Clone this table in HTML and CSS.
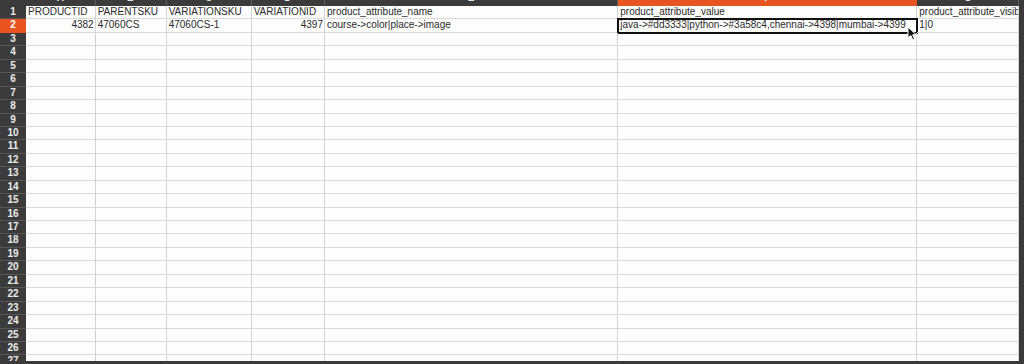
FILE: index.html
```html
<!DOCTYPE html>
<html>
<head>
<meta charset="utf-8">
<title>Sheet</title>
<link rel="stylesheet" href="styles.css">
</head>
<body>
<div class="frame">
  <div class="sheet">
    <div class="ch corner"></div>
    <div class="ch"><span>A</span></div>
    <div class="ch"><span>B</span></div>
    <div class="ch"><span>C</span></div>
    <div class="ch"><span>D</span></div>
    <div class="ch"><span>E</span></div>
    <div class="ch sel"><span>F</span></div>
    <div class="ch"><span>G</span></div>

    <div class="rh">1</div>
    <div class="c">PRODUCTID</div>
    <div class="c">PARENTSKU</div>
    <div class="c">VARIATIONSKU</div>
    <div class="c">VARIATIONID</div>
    <div class="c">product_attribute_name</div>
    <div class="c">product_attribute_value</div>
    <div class="c">product_attribute_visibility</div>

    <div class="rh sel">2</div>
    <div class="c num">4382</div>
    <div class="c">47060CS</div>
    <div class="c">47060CS-1</div>
    <div class="c num">4397</div>
    <div class="c">course-&gt;color|place-&gt;image</div>
    <div class="c active">java-&gt;#dd3333|python-&gt;#3a58c4,chennai-&gt;4398|mumbai-&gt;4399</div>
    <div class="c">1|0</div>

    <div class="rh">3</div><div class="c"></div><div class="c"></div><div class="c"></div><div class="c"></div><div class="c"></div><div class="c"></div><div class="c"></div>
    <div class="rh">4</div><div class="c"></div><div class="c"></div><div class="c"></div><div class="c"></div><div class="c"></div><div class="c"></div><div class="c"></div>
    <div class="rh">5</div><div class="c"></div><div class="c"></div><div class="c"></div><div class="c"></div><div class="c"></div><div class="c"></div><div class="c"></div>
    <div class="rh">6</div><div class="c"></div><div class="c"></div><div class="c"></div><div class="c"></div><div class="c"></div><div class="c"></div><div class="c"></div>
    <div class="rh">7</div><div class="c"></div><div class="c"></div><div class="c"></div><div class="c"></div><div class="c"></div><div class="c"></div><div class="c"></div>
    <div class="rh">8</div><div class="c"></div><div class="c"></div><div class="c"></div><div class="c"></div><div class="c"></div><div class="c"></div><div class="c"></div>
    <div class="rh">9</div><div class="c"></div><div class="c"></div><div class="c"></div><div class="c"></div><div class="c"></div><div class="c"></div><div class="c"></div>
    <div class="rh">10</div><div class="c"></div><div class="c"></div><div class="c"></div><div class="c"></div><div class="c"></div><div class="c"></div><div class="c"></div>
    <div class="rh">11</div><div class="c"></div><div class="c"></div><div class="c"></div><div class="c"></div><div class="c"></div><div class="c"></div><div class="c"></div>
    <div class="rh">12</div><div class="c"></div><div class="c"></div><div class="c"></div><div class="c"></div><div class="c"></div><div class="c"></div><div class="c"></div>
    <div class="rh">13</div><div class="c"></div><div class="c"></div><div class="c"></div><div class="c"></div><div class="c"></div><div class="c"></div><div class="c"></div>
    <div class="rh">14</div><div class="c"></div><div class="c"></div><div class="c"></div><div class="c"></div><div class="c"></div><div class="c"></div><div class="c"></div>
    <div class="rh">15</div><div class="c"></div><div class="c"></div><div class="c"></div><div class="c"></div><div class="c"></div><div class="c"></div><div class="c"></div>
    <div class="rh">16</div><div class="c"></div><div class="c"></div><div class="c"></div><div class="c"></div><div class="c"></div><div class="c"></div><div class="c"></div>
    <div class="rh">17</div><div class="c"></div><div class="c"></div><div class="c"></div><div class="c"></div><div class="c"></div><div class="c"></div><div class="c"></div>
    <div class="rh">18</div><div class="c"></div><div class="c"></div><div class="c"></div><div class="c"></div><div class="c"></div><div class="c"></div><div class="c"></div>
    <div class="rh">19</div><div class="c"></div><div class="c"></div><div class="c"></div><div class="c"></div><div class="c"></div><div class="c"></div><div class="c"></div>
    <div class="rh">20</div><div class="c"></div><div class="c"></div><div class="c"></div><div class="c"></div><div class="c"></div><div class="c"></div><div class="c"></div>
    <div class="rh">21</div><div class="c"></div><div class="c"></div><div class="c"></div><div class="c"></div><div class="c"></div><div class="c"></div><div class="c"></div>
    <div class="rh">22</div><div class="c"></div><div class="c"></div><div class="c"></div><div class="c"></div><div class="c"></div><div class="c"></div><div class="c"></div>
    <div class="rh">23</div><div class="c"></div><div class="c"></div><div class="c"></div><div class="c"></div><div class="c"></div><div class="c"></div><div class="c"></div>
    <div class="rh">24</div><div class="c"></div><div class="c"></div><div class="c"></div><div class="c"></div><div class="c"></div><div class="c"></div><div class="c"></div>
    <div class="rh">25</div><div class="c"></div><div class="c"></div><div class="c"></div><div class="c"></div><div class="c"></div><div class="c"></div><div class="c"></div>
    <div class="rh">26</div><div class="c"></div><div class="c"></div><div class="c"></div><div class="c"></div><div class="c"></div><div class="c"></div><div class="c"></div>
    <div class="rh">27</div><div class="c"></div><div class="c"></div><div class="c"></div><div class="c"></div><div class="c"></div><div class="c"></div><div class="c"></div>
  </div>
  <div class="vbar"></div>
  <svg class="cursor" width="12" height="16" viewBox="0 0 12 16">
    <path d="M1 1 L1 12 L3.8 9.4 L5.8 14 L7.6 13.2 L5.7 8.8 L9.4 8.8 Z" fill="#111" stroke="#fff" stroke-width="1" stroke-linejoin="round"/>
  </svg>
</div>
</body>
</html>
```

FILE: styles.css
```css
html, body {
  margin: 0;
  padding: 0;
  background: #3a3a3a;
}

.frame {
  position: relative;
  display: flex;
  width: 1024px;
  height: 364px;
  background: #3a3a3a;
}

.sheet {
  display: grid;
  grid-template-columns: 26px 69.7px 71px 85px 73.3px 293.3px 299px 101.7px;
  grid-template-rows: 6px repeat(27, 13.44px);
  width: 1019px;
  height: 361px;
  overflow: hidden;
  background: #fdfdfd;
  font-family: "Liberation Sans", Arial, sans-serif;
  font-size: 10px;
  color: #2b2b2b;
}

.vbar {
  flex: 1;
  background: #3a3a3a;
}

.ch {
  background: #3b3b3b;
  border-right: 1px solid #5e5e5e;
  box-sizing: border-box;
  overflow: hidden;
  color: #e6e6e6;
  text-align: center;
  font-size: 10px;
  font-weight: bold;
}

.ch span {
  display: block;
  line-height: 10px;
  margin-top: -7px;
}

.ch.corner {
  border-right: none;
}

.ch.sel {
  background: #e95420;
  border-right-color: #e95420;
  color: #fff;
}

.rh {
  background: #3b3b3b;
  color: #ececec;
  font-weight: bold;
  font-size: 10px;
  text-align: center;
  line-height: 12.44px;
  border-bottom: 1px solid #575757;
  box-sizing: border-box;
  overflow: hidden;
}

.rh.sel {
  background: #e95420;
  color: #fff;
  border-bottom-color: #e95420;
}

.c {
  border-right: 1px solid #d2d2d2;
  border-bottom: 1px solid #dadada;
  box-sizing: border-box;
  padding: 0 2px;
  line-height: 12.44px;
  white-space: nowrap;
  overflow: hidden;
}

.c.num {
  text-align: right;
  padding-right: 1px;
}

.c.active {
  outline: 2px solid #111;
  outline-offset: -1px;
}

.cursor {
  position: absolute;
  left: 907px;
  top: 26px;
}
```
